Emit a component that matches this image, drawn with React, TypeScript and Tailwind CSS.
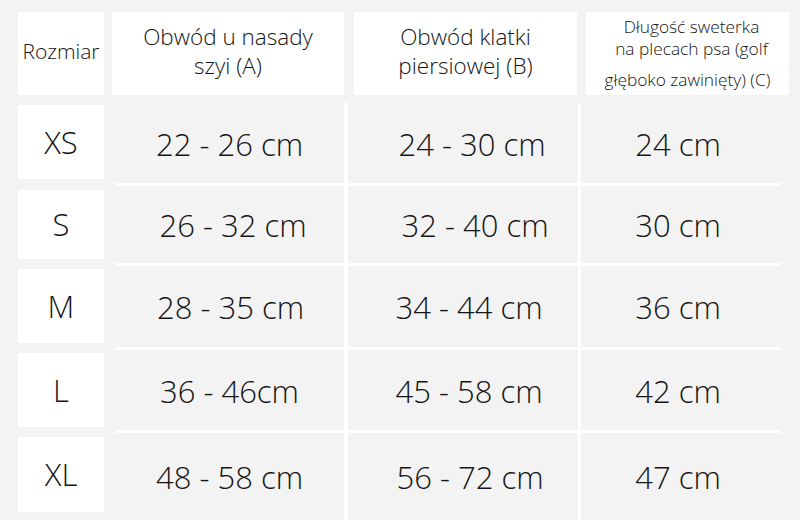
import React from 'react';

type Row = {
  size: string;
  a: string;
  b: string;
  c: string;
  h: string; // row height incl. bottom line
  cell: string; // left white cell offset/height
  aPad: string;
  bPad: string;
};

const rows: Row[] = [
  { size: 'XS', a: '22 - 26 cm', b: '24 - 30 cm', c: '24 cm', h: 'h-[83px]', cell: 'mt-[2px] h-[74px]', aPad: 'pl-[0px]', bPad: 'pl-[18px]' },
  { size: 'S', a: '26 - 32 cm', b: '32 - 40 cm', c: '30 cm', h: 'h-[80px]', cell: 'mt-[4px] h-[69px]', aPad: 'pl-[7px]', bPad: 'pl-[24px]' },
  { size: 'M', a: '28 - 35 cm', b: '34 - 44 cm', c: '36 cm', h: 'h-[84px]', cell: 'mt-[3px] h-[74px]', aPad: 'pl-[2px]', bPad: 'pl-[12px]' },
  { size: 'L', a: '36 - 46cm', b: '45 - 58 cm', c: '42 cm', h: 'h-[83px]', cell: 'mt-[3px] h-[74px]', aPad: 'pl-[0px]', bPad: 'pl-[12px]' },
  { size: 'XL', a: '48 - 58 cm', b: '56 - 72 cm', c: '47 cm', h: 'h-[87px]', cell: 'mt-[4px] h-[75px]', aPad: 'pl-[0px]', bPad: 'pl-[14px]' },
];

const font = { fontFamily: '"Open Sans", "Noto Sans", sans-serif' };

export default function App() {
  return (
    <div className="w-[800px] h-[520px] overflow-hidden bg-[#f3f3f3] text-[#151515] font-[350]" style={font}>
      {/* Header */}
      <div className="flex pt-[12px] pl-[18px] h-[103px]">
        <div className="w-[86px] h-[83px] bg-white flex items-center justify-center text-[21px] pb-[4px]">
          Rozmiar
        </div>
        <div className="ml-[8px] w-[232px] h-[83px] bg-white flex flex-col items-center pt-[10px] text-[22.5px] leading-[29px]">
          <span>Obwód u nasady</span>
          <span>szyi (A)</span>
        </div>
        <div className="ml-[10px] w-[223px] h-[83px] bg-white flex flex-col items-center pt-[10px] text-[22.5px] leading-[29px]">
          <span>Obwód klatki</span>
          <span>piersiowej (B)</span>
        </div>
        <div className="ml-[9px] w-[203px] h-[83px] bg-white flex flex-col items-center pt-[4px] text-[17.3px] leading-[22px]">
          <span className="pl-[8px]">Długość sweterka</span>
          <span className="pl-[8px]">na plecach psa (golf</span>
          <span className="mt-[9px]">głęboko zawinięty) (C)</span>
        </div>
      </div>

      {/* Body */}
      {rows.map((r, i) => {
        const last = i === rows.length - 1;
        return (
          <div key={r.size} className={`flex ${r.h}`}>
            <div className="pl-[18px] w-[104px] shrink-0">
              <div className={`w-[86px] bg-white flex items-center justify-center text-[31px] ${r.cell}`}>
                {r.size}
              </div>
            </div>
            <div className="ml-[11px] w-[233px] shrink-0 border-r-[4px] border-white flex flex-col">
              <div className={`flex-1 flex items-center justify-center text-[31px] pt-[2px] ${r.aPad} ${last ? '' : 'border-b-[3px] border-white'}`}>
                {r.a}
              </div>
            </div>
            <div className="w-[233px] shrink-0 border-r-[3px] border-white flex flex-col">
              <div className={`flex-1 flex items-center justify-center text-[31px] pt-[2px] ${r.bPad} ${last ? '' : 'border-b-[3px] border-white'}`}>
                {r.b}
              </div>
            </div>
            <div className="w-[200px] shrink-0 flex flex-col">
              <div className={`flex-1 flex items-center justify-center text-[31px] pt-[2px] pr-[6px] ${last ? '' : 'border-b-[3px] border-white'}`}>
                {r.c}
              </div>
            </div>
          </div>
        );
      })}
    </div>
  );
}
